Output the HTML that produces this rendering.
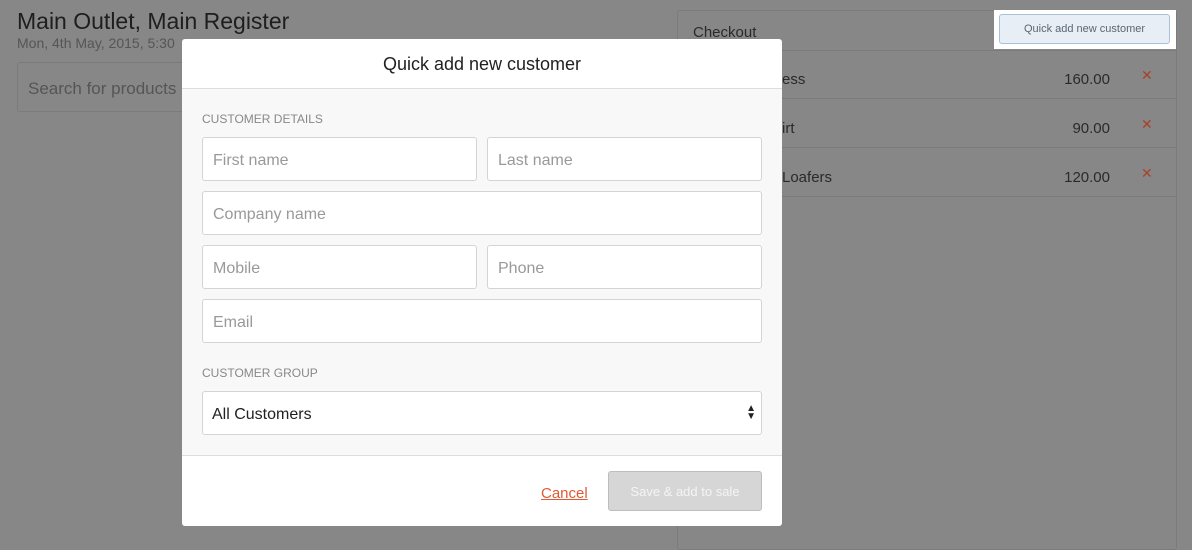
<!DOCTYPE html>
<html><head><meta charset="utf-8"><style>
*{box-sizing:border-box;margin:0;padding:0}
body{width:1192px;height:537px;background:#878787;font-family:"Liberation Sans",sans-serif;position:relative;overflow:hidden;color:#222}
.abs{position:absolute}
.inp{position:absolute;height:44px;background:#fff;border:1px solid #d4d4d4;border-radius:3px;font-size:16px;color:#999;padding:13px 10px;line-height:19px}
.row{position:absolute;left:677px;width:500px;height:49px;border-bottom:1px solid #7b7b7b;font-size:15px;color:#2a2a2a}
.x{position:absolute;left:464px;top:17px;color:#a9412a;font-size:14px}
.pr{position:absolute;right:67px;top:21px}
.nm{position:absolute;left:105px;top:21px}
</style></head><body>
<div class="abs" style="left:17px;top:8px;font-size:23px;color:#1e1e1e">Main Outlet, Main Register</div>
<div class="abs" style="left:17px;top:35px;font-size:14px;color:#555">Mon, 4th May, 2015, 5:30</div>
<div class="abs" style="left:17px;top:62px;width:200px;height:50px;border:1px solid #7b7b7b;border-radius:3px;font-size:17px;color:#555;padding:16px 10px">Search for products</div>
<div class="abs" style="left:677px;top:10px;width:500px;height:540px;border:1px solid #7b7b7b;border-radius:3px"></div>
<div class="abs" style="left:693px;top:24px;font-size:15px;color:#2a2a2a">Checkout</div>
<div class="abs" style="left:677px;top:50px;width:500px;border-top:1px solid #7b7b7b"></div>
<div class="row" style="top:50px"><span class="nm">ess</span><span class="pr">160.00</span><span class="x">✕</span></div>
<div class="row" style="top:99px"><span class="nm">irt</span><span class="pr">90.00</span><span class="x">✕</span></div>
<div class="row" style="top:148px"><span class="nm">Loafers</span><span class="pr">120.00</span><span class="x">✕</span></div>
<div class="abs" style="left:994px;top:10px;width:182px;height:39px;background:#fff"></div>
<div class="abs" style="left:999px;top:14px;width:171px;height:30px;background:#e7eef6;border:1px solid #a8c1d8;border-radius:3px;font-size:11px;color:#5c6670;text-align:center;line-height:28px">Quick add new customer</div>

<div class="abs" style="left:182px;top:39px;width:600px;height:487px;background:#fff;border-radius:3px;overflow:hidden">
<div class="abs" style="left:0;top:0;width:600px;height:50px;border-bottom:1px solid #ddd;text-align:center;font-size:18px;line-height:50px;color:#222">Quick add new customer</div>
<div class="abs" style="left:0;top:50px;width:600px;height:367px;background:#f8f8f8;border-bottom:1px solid #ddd"></div>
<div class="abs" style="left:20px;top:73px;font-size:12px;color:#888">CUSTOMER DETAILS</div>
<div class="inp" style="left:20px;top:98px;width:275px">First name</div>
<div class="inp" style="left:305px;top:98px;width:275px">Last name</div>
<div class="inp" style="left:20px;top:152px;width:560px">Company name</div>
<div class="inp" style="left:20px;top:206px;width:275px">Mobile</div>
<div class="inp" style="left:305px;top:206px;width:275px">Phone</div>
<div class="inp" style="left:20px;top:260px;width:560px">Email</div>
<div class="abs" style="left:20px;top:327px;font-size:12px;color:#888">CUSTOMER GROUP</div>
<div class="inp" style="left:20px;top:352px;width:560px;color:#222;padding-left:9px">All Customers<span style="position:absolute;right:5px;top:13px;font-size:10px;line-height:8px;color:#222">▲<br>▼</span></div>
<div class="abs" style="left:359px;top:446px;font-size:15px;color:#e05a33;text-decoration:underline">Cancel</div>
<div class="abs" style="left:426px;top:432px;width:154px;height:40px;background:#d6d6d6;border:1px solid #bdbdbd;border-radius:3px;color:#f4f4f4;font-size:13px;text-align:center;line-height:40px">Save &amp; add to sale</div>
</div>
</body></html>
